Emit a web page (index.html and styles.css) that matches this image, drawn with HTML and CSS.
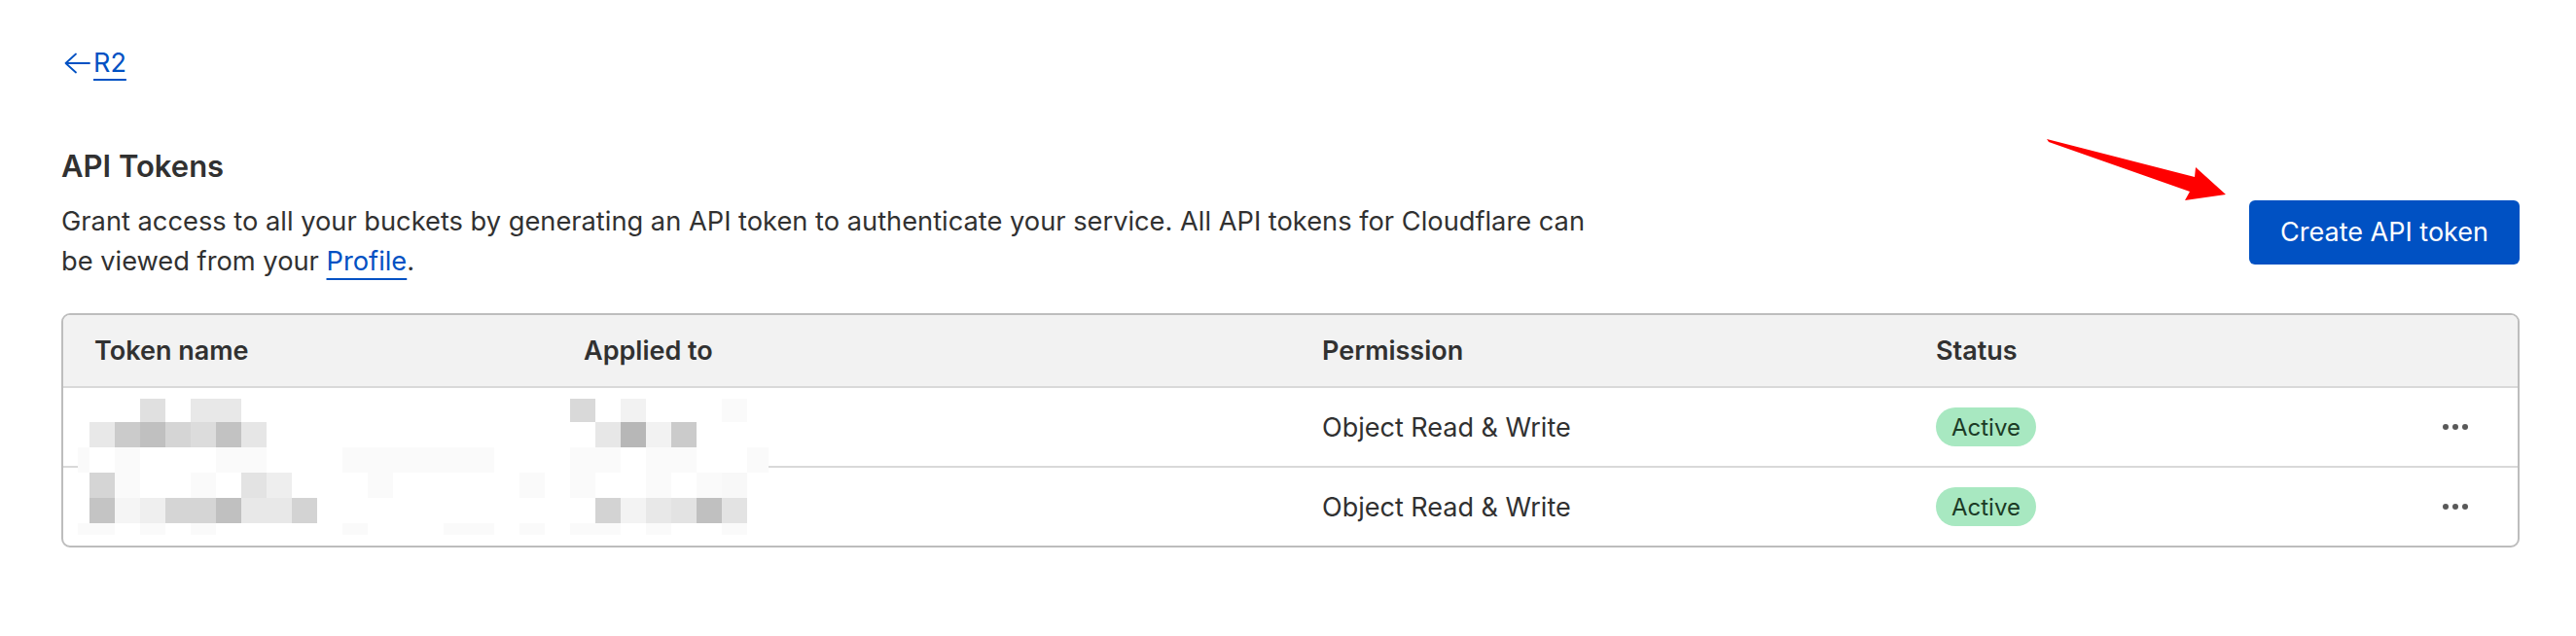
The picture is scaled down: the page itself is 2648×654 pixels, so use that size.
FILE: index.html
```html
<!DOCTYPE html>
<html lang="en">
<head>
<meta charset="utf-8">
<title>R2 API Tokens</title>
<link rel="stylesheet" href="styles.css">
</head>
<body>
<div class="page">
  <a class="back" href="#">
    <svg class="back-icon" viewBox="0 0 28 22" aria-hidden="true"><path d="M27 11H3M13 1.5L2.5 11L13 20.5" fill="none" stroke="currentColor" stroke-width="1.8" stroke-linecap="round" stroke-linejoin="round"/></svg>
    <span class="back-text">R2</span>
  </a>

  <section class="tokens">
    <div class="tokens-head">
      <div class="intro">
        <h2 class="title">API Tokens</h2>
        <p class="desc">Grant access to all your buckets by generating an API token to authenticate your service. All API tokens for Cloudflare can be viewed from your <a class="link" href="#">Profile</a>.</p>
      </div>
      <button class="btn-primary" type="button">Create API token</button>
    </div>

    <div class="table">
      <div class="row head">
        <div class="cell">Token name</div>
        <div class="cell">Applied to</div>
        <div class="cell">Permission</div>
        <div class="cell">Status</div>
        <div class="cell actions"></div>
      </div>
      <div class="row">
        <div class="cell"></div>
        <div class="cell"></div>
        <div class="cell">Object Read &amp; Write</div>
        <div class="cell"><span class="badge">Active</span></div>
        <div class="cell actions"><span class="dots"><i></i><i></i><i></i></span></div>
      </div>
      <div class="row">
        <div class="cell"></div>
        <div class="cell"></div>
        <div class="cell">Object Read &amp; Write</div>
        <div class="cell"><span class="badge">Active</span></div>
        <div class="cell actions"><span class="dots"><i></i><i></i><i></i></span></div>
      </div>

      <svg class="mask" viewBox="0 0 710 145" aria-hidden="true">
        <rect x="0" y="0" width="710" height="145" fill="#ffffff"/>
        <rect x="64" y="5" width="26" height="24" fill="#e0e0e0"/>
        <rect x="116" y="5" width="52" height="24" fill="#e8e8e8"/>
        <rect x="506" y="5" width="26" height="24" fill="#d9d9d9"/>
        <rect x="558" y="5" width="26" height="24" fill="#f2f2f2"/>
        <rect x="662" y="5" width="26" height="24" fill="#fafafa"/>

        <rect x="12" y="29" width="26" height="26" fill="#e8e8e8"/>
        <rect x="38" y="29" width="26" height="26" fill="#cbcbcb"/>
        <rect x="64" y="29" width="26" height="26" fill="#c0c0c0"/>
        <rect x="90" y="29" width="26" height="26" fill="#d5d5d5"/>
        <rect x="116" y="29" width="26" height="26" fill="#dcdcdc"/>
        <rect x="142" y="29" width="26" height="26" fill="#c2c2c2"/>
        <rect x="168" y="29" width="26" height="26" fill="#e6e6e6"/>
        <rect x="532" y="29" width="26" height="26" fill="#e7e7e7"/>
        <rect x="558" y="29" width="26" height="26" fill="#b7b7b7"/>
        <rect x="584" y="29" width="26" height="26" fill="#f2f2f2"/>
        <rect x="610" y="29" width="26" height="26" fill="#cbcbcb"/>

        <rect x="0" y="55" width="12" height="26" fill="#fafafa"/>
        <rect x="38" y="55" width="26" height="26" fill="#fafafa"/>
        <rect x="142" y="55" width="52" height="26" fill="#fafafa"/>
        <rect x="272" y="55" width="156" height="26" fill="#fafafa"/>
        <rect x="506" y="55" width="52" height="26" fill="#fafafa"/>
        <rect x="584" y="55" width="52" height="26" fill="#fafafa"/>
        <rect x="688" y="55" width="22" height="26" fill="#fafafa"/>

        <rect x="12" y="81" width="26" height="26" fill="#d5d5d5"/>
        <rect x="38" y="81" width="26" height="26" fill="#fafafa"/>
        <rect x="116" y="81" width="26" height="26" fill="#fafafa"/>
        <rect x="168" y="81" width="26" height="26" fill="#e3e3e3"/>
        <rect x="194" y="81" width="26" height="26" fill="#eeeeee"/>
        <rect x="298" y="81" width="26" height="26" fill="#fafafa"/>
        <rect x="454" y="81" width="26" height="26" fill="#fafafa"/>
        <rect x="506" y="81" width="26" height="26" fill="#fafafa"/>
        <rect x="584" y="81" width="26" height="26" fill="#fafafa"/>
        <rect x="636" y="81" width="26" height="26" fill="#fafafa"/>
        <rect x="662" y="81" width="26" height="26" fill="#f8f8f8"/>

        <rect x="12" y="107" width="26" height="26" fill="#c4c4c4"/>
        <rect x="38" y="107" width="26" height="26" fill="#f5f5f5"/>
        <rect x="64" y="107" width="26" height="26" fill="#efefef"/>
        <rect x="90" y="107" width="26" height="26" fill="#d5d5d5"/>
        <rect x="116" y="107" width="26" height="26" fill="#d5d5d5"/>
        <rect x="142" y="107" width="26" height="26" fill="#c0c0c0"/>
        <rect x="168" y="107" width="26" height="26" fill="#e8e8e8"/>
        <rect x="194" y="107" width="26" height="26" fill="#e8e8e8"/>
        <rect x="220" y="107" width="26" height="26" fill="#d3d3d3"/>
        <rect x="532" y="107" width="26" height="26" fill="#d3d3d3"/>
        <rect x="558" y="107" width="26" height="26" fill="#f3f3f3"/>
        <rect x="584" y="107" width="26" height="26" fill="#e8e8e8"/>
        <rect x="610" y="107" width="26" height="26" fill="#e3e3e3"/>
        <rect x="636" y="107" width="26" height="26" fill="#c0c0c0"/>
        <rect x="662" y="107" width="26" height="26" fill="#e3e3e3"/>

        <rect x="0" y="133" width="38" height="12" fill="#fafafa"/>
        <rect x="64" y="133" width="26" height="12" fill="#fafafa"/>
        <rect x="116" y="133" width="26" height="12" fill="#fafafa"/>
        <rect x="272" y="133" width="26" height="12" fill="#fafafa"/>
        <rect x="376" y="133" width="52" height="12" fill="#fafafa"/>
        <rect x="454" y="133" width="26" height="12" fill="#fafafa"/>
        <rect x="506" y="133" width="52" height="12" fill="#fafafa"/>
        <rect x="584" y="133" width="26" height="12" fill="#fafafa"/>
        <rect x="662" y="133" width="26" height="12" fill="#fafafa"/>
      </svg>
    </div>
  </section>

  <svg class="annot-arrow" viewBox="0 0 200 70" aria-hidden="true">
    <polygon points="4,3 156,42 157,32 188,60 146,66 151,57 6,6" fill="#ff0000"/>
  </svg>
</div>
</body>
</html>
```

FILE: styles.css
```css
* {
  box-sizing: border-box;
}

html, body {
  margin: 0;
  background: #ffffff;
}

body {
  font-family: "Inter", "Noto Sans", "Liberation Sans", sans-serif;
  color: #313131;
}

.page {
  position: relative;
  padding: 47px 58px 0 63px;
}

/* back link */
.back {
  display: inline-flex;
  align-items: center;
  height: 36px;
  font-size: 27px;
  line-height: 36px;
  color: #0051c3;
  text-decoration: none;
}

.back-icon {
  width: 28px;
  height: 22px;
  margin-left: 2px;
  margin-right: 3px;
}

.back-text {
  text-decoration: underline;
  text-decoration-thickness: 2px;
  text-underline-offset: 7px;
}

/* header area */
.tokens {
  margin-top: 68px;
}

.tokens-head {
  display: flex;
  justify-content: space-between;
  align-items: flex-start;
}

.title {
  margin: 0;
  font-size: 31px;
  font-weight: 600;
  line-height: 40px;
  color: #313131;
}

.desc {
  margin: 16px 0 0;
  max-width: 1590px;
  font-size: 27.25px;
  line-height: 41px;
}

.link {
  color: #0051c3;
  text-decoration: underline;
  text-decoration-thickness: 2px;
  text-underline-offset: 8px;
}

.btn-primary {
  margin-top: 55px;
  height: 66px;
  padding: 0 32px;
  border: none;
  border-radius: 6px;
  background: #0051c3;
  color: #ffffff;
  font-family: inherit;
  font-size: 27px;
  line-height: 66px;
  white-space: nowrap;
}

/* table */
.table {
  position: relative;
  margin-top: 33px;
  border: 2px solid #bdbdbd;
  border-radius: 9px;
  overflow: hidden;
}

.row {
  display: grid;
  grid-template-columns: 503px 759px 631px 1fr auto;
  align-items: center;
  height: 82px;
  padding: 0 51px 0 32px;
  border-top: 2px solid #d9d9d9;
  font-size: 27px;
}

.row.head {
  height: 73px;
  border-top: none;
  background: #f2f2f2;
  font-weight: 600;
}

.badge {
  display: inline-flex;
  align-items: center;
  height: 40px;
  padding: 0 16px;
  border-radius: 20px;
  background: #a8e8c1;
  color: #1c3b26;
  font-size: 24px;
}

.dots {
  display: flex;
  gap: 4px;
}

.dots i {
  display: block;
  width: 6px;
  height: 6px;
  border-radius: 50%;
  background: #595959;
}

.mask {
  position: absolute;
  left: 15px;
  top: 81px;
  width: 710px;
  height: 145px;
}

/* annotation arrow */
.annot-arrow {
  position: absolute;
  left: 2100px;
  top: 140px;
  width: 200px;
  height: 70px;
}
```
